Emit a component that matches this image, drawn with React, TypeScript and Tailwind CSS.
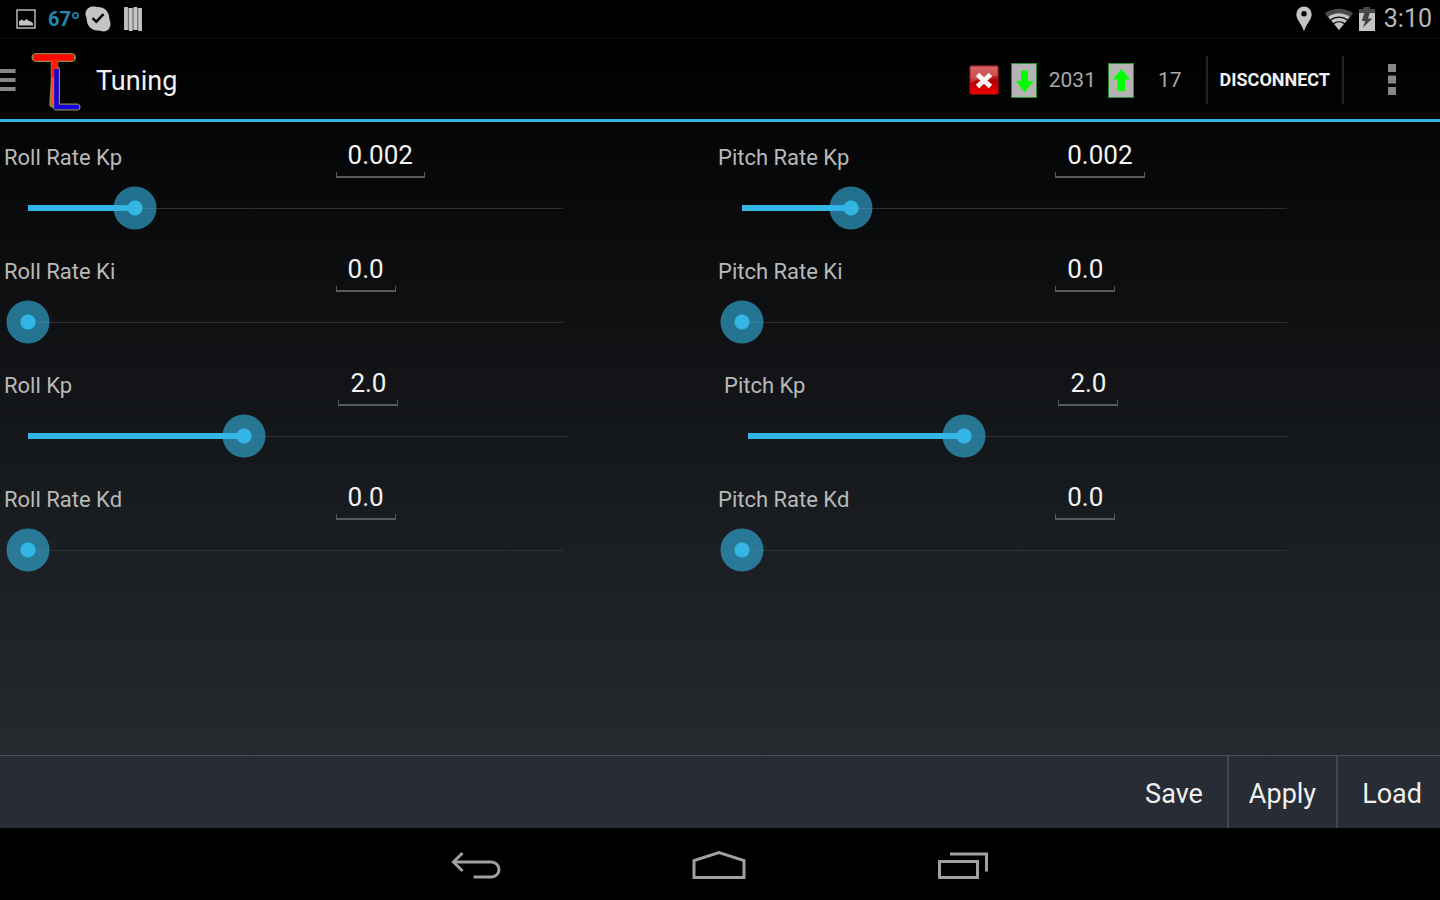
import { useState } from 'react';
import { clsx } from 'clsx';

type Gain = {
  id: string;
  label: string;
  text: string;
  /** Slider position, 0 - 1000 */
  position: number;
};

type GainRow = {
  id: string;
  /** Rows with short labels split the width evenly */
  even: boolean;
  gains: Gain[];
};

const ROWS: GainRow[] = [
  {
    id: 'rate-kp',
    even: false,
    gains: [
      { id: 'roll-rate-kp', label: 'Roll Rate Kp', text: '0.002', position: 200 },
      { id: 'pitch-rate-kp', label: 'Pitch Rate Kp', text: '0.002', position: 200 },
    ],
  },
  {
    id: 'rate-ki',
    even: false,
    gains: [
      { id: 'roll-rate-ki', label: 'Roll Rate Ki', text: '0.0', position: 0 },
      { id: 'pitch-rate-ki', label: 'Pitch Rate Ki', text: '0.0', position: 0 },
    ],
  },
  {
    id: 'kp',
    even: true,
    gains: [
      { id: 'roll-kp', label: 'Roll Kp', text: '2.0', position: 400 },
      { id: 'pitch-kp', label: 'Pitch Kp', text: '2.0', position: 400 },
    ],
  },
  {
    id: 'rate-kd',
    even: false,
    gains: [
      { id: 'roll-rate-kd', label: 'Roll Rate Kd', text: '0.0', position: 0 },
      { id: 'pitch-rate-kd', label: 'Pitch Rate Kd', text: '0.0', position: 0 },
    ],
  },
];

function StatusBar() {
  return (
    <div className="flex h-[38px] items-center justify-between pl-4 pr-2">
      <div className="flex items-center">
        <svg width="20" height="20" viewBox="0 0 20 20" className="mr-3">
          <rect x="1" y="1" width="18" height="18" fill="none" stroke="#c4c4c4" strokeWidth="1.4" />
          <path d="M3 16.500v-4L5.500 10.500l2.500 1.500L10.500 10l2.500 2 2 .5L17 14.500v2z" fill="#c4c4c4" />
        </svg>
        <span className="mr-1 text-xl font-bold leading-6 text-[#2288b2]">67º</span>
        <svg width="28" height="28" viewBox="0 0 28 28" className="mr-3">
          <path
            d="M8.500 1.500C11 1.200 12 2 14 2c6.500 0 11 4.500 11.300 11 0 2 1.200 3.500 1.200 6 0 4.500-3 7.500-7 7.500-2.200 0-3-.9-5-.9C7.500 25.600 2.800 21 2.800 14.500c0-2-1.300-3-1.300-5.500 0-4 3-7.300 7-7.500z"
            fill="#c4c4c4"
          />
          <path d="M8.500 13.200l3.800 3.500 7.200-7.500" fill="none" stroke="#000" strokeWidth="2.400" />
        </svg>
        <svg width="18" height="24" viewBox="0 0 18 24">
          <rect y="1" width="18" height="22" fill="#666" />
          <path d="M2 0v23M6.700 1v23M11.400 0v23M16.100 1v23" stroke="#c4c4c4" strokeWidth="3.600" />
        </svg>
      </div>
      <div className="flex items-center">
        <svg width="16" height="26" viewBox="0 0 16 26" className="mr-3">
          <path
            fillRule="evenodd"
            d="M8 .5a7.700 7.700 0 0 1 7.700 7.700C15.700 14 10 18 8 25.500 6 18 .3 14 .3 8.200A7.700 7.700 0 0 1 8 .5zM8 5a2.700 2.700 0 1 0 0 5.400A2.700 2.700 0 0 0 8 5z"
            fill="#c4c4c4"
          />
        </svg>
        <svg width="30" height="24" viewBox="0 0 30 24" className="mr-1">
          <path d="M15 23L.8 6.500C9 .3 21 .3 29.200 6.500z" fill="#4a4a4a" />
          <path d="M15 23L4.300 9.800c6.500-4.700 14.900-4.700 21.400 0z" fill="#c4c4c4" />
          <path d="M6.200 13.200c5.200-4 12.400-4 17.600 0M9 17c3.600-2.800 8.400-2.800 12 0" fill="none" stroke="#000" strokeWidth="1.300" />
        </svg>
        <svg width="18" height="26" viewBox="0 0 18 26" className="mr-2">
          <path d="M5.500 1h6.500v2H17v5H1V3h4.500z" fill="#4a4a4a" />
          <path d="M1 7h16v18H1z" fill="#c4c4c4" />
          <path d="M6.500 6.500h5.500l-2 6h4.500L5 21.500l2.200-6.500H3.800z" fill="#444" />
        </svg>
        <span className="text-[25px] leading-8 text-[#b8b8b8]">3:10</span>
      </div>
    </div>
  );
}

function Logo() {
  return (
    <svg width="52" height="62" viewBox="0 0 52 62" fill="none" className="ml-3.5 shrink-0" aria-hidden="true">
      <g stroke="#8d8a4a" strokeLinejoin="round" strokeLinecap="round">
        <path d="M6 8.500h35.500" strokeWidth="9" />
        <path d="M24.500 12v20L23 55" strokeWidth="7.500" />
        <path d="M26.500 21v37H47" strokeWidth="7" />
      </g>
      <path d="M3.500 8.500h40.500" stroke="#ff0600" strokeWidth="6.500" />
      <path d="M24.500 10v20" stroke="#ff1a00" strokeWidth="6" />
      <path d="M23 28l-.5 28" stroke="#ff4a30" strokeWidth="3.500" />
      <path d="M26.500 20v38H49" stroke="#1400e0" strokeWidth="4.500" />
    </svg>
  );
}

function ArrowBox({ up = false }: { up?: boolean }) {
  return (
    <svg width="26" height="35" viewBox="0 0 26 35" className={clsx('shrink-0', up ? 'mr-6' : 'mr-3')}>
      <rect x=".5" y=".5" width="25" height="34" fill="#b4b4b4" stroke="#2f8f2f" strokeWidth="1" />
      <path
        d={up ? 'M13.500 6l8.500 10.500h-5V28H9.500V16.500h-5z' : 'M10 7.500h7V18h5.500L13.500 29.500 5 18h5z'}
        fill="#00ff00"
      />
    </svg>
  );
}

function ActionBar() {
  return (
    <header className="flex h-[84px] items-center border-b-3 border-[#33b5e5] border-t border-t-[#0c0c0c] pt-0.5">
      <button type="button" aria-label="Open drawer" className="flex h-full items-center">
        <svg width="16" height="22" viewBox="0 0 16 22">
          <path d="M0 2h15.500M0 11h15.500M0 20h15.500" stroke="#85878a" strokeWidth="4" />
        </svg>
        <Logo />
      </button>
      <h1 className="ml-3.5 flex-1 pt-0.5 text-[27px] leading-8 text-[#f0f0f0]">Tuning</h1>

      <svg width="30" height="30" viewBox="0 0 30 30" className="mr-3 shrink-0">
        <defs>
          <linearGradient id="alert" x1="0" y1="0" x2="0" y2="1">
            <stop offset="0" stopColor="#c63a3a" />
            <stop offset=".45" stopColor="#bb1c1c" />
            <stop offset=".5" stopColor="#b00000" />
            <stop offset="1" stopColor="#f40000" />
          </linearGradient>
        </defs>
        <rect x=".8" y=".8" width="28.400" height="28.400" rx="1.500" fill="url(#alert)" stroke="#8c1010" strokeWidth="1" />
        <path d="M1.500 1.500h27V11C20 11 12 13 1.500 18z" fill="#fff" opacity=".22" />
        <path d="M8.500 9.500l13 12M21.500 9.500l-13 12" stroke="#f4f4f4" strokeWidth="5" />
      </svg>
      <ArrowBox />
      <span className="mr-3 text-[21px] leading-7 text-[#a8a8a8]">2031</span>
      <ArrowBox up />
      <span className="mr-6 text-[21px] leading-7 text-[#a8a8a8]">17</span>
      <button
        type="button"
        className="h-12 border-x-2 border-[#222] px-3 text-lg font-bold text-[#f0f0f0]"
      >
        DISCONNECT
      </button>
      <button type="button" aria-label="More options" className="flex h-full w-24 items-center justify-center">
        <svg width="8" height="32" viewBox="0 0 8 32">
          <path d="M0 0h8v8H0zM0 11.500h8v8H0zM0 23h8v8H0z" fill="#888" />
        </svg>
      </button>
    </header>
  );
}

function GainControl({ gain }: { gain: Gain }) {
  const [text, setText] = useState(gain.text);
  const [position, setPosition] = useState(gain.position);

  return (
    <div className="flex h-[114px] flex-col">
      <div className="flex pt-3">
        <label htmlFor={gain.id} className="w-[47%] pl-1 pt-2.5 text-[22px] leading-7 text-[#b9b9b9]">
          {gain.label}
        </label>
        <div className="inline-grid">
          <input
            id={gain.id}
            type="text"
            value={text}
            onChange={(e) => setText(e.target.value)}
            className="col-start-1 row-start-1 h-11 field-sizing-content bg-transparent px-3 pb-0.5 text-[26px] leading-8 text-[#f3f3f3] outline-none"
          />
          <span className="pointer-events-none col-start-1 row-start-1 h-1.5 self-end border-x border-b-2 border-[#57595b]" />
        </div>
      </div>
      <div className="grid w-[82%] items-center pl-1.5 pt-2">
        <span className="col-start-1 row-start-1 mx-[22px] h-px bg-[#2e3033]" />
        <div className="col-start-1 row-start-1 mx-[22px]">
          <div className="h-1.5 bg-[#33b5e5]" style={{ width: `${position / 10}%` }} />
        </div>
        <input
          type="range"
          min={0}
          max={1000}
          value={position}
          aria-label={gain.label}
          onChange={(e) => setPosition(Number(e.target.value))}
          className="col-start-1 row-start-1 h-11 w-full appearance-none bg-transparent outline-none [&::-webkit-slider-thumb]:size-11 [&::-webkit-slider-thumb]:appearance-none [&::-webkit-slider-thumb]:rounded-full [&::-webkit-slider-thumb]:bg-[radial-gradient(circle,#33b5e5_7px,rgba(51,181,229,0.6)_8px,rgba(51,181,229,0.6)_21px,transparent_22px)]"
        />
      </div>
    </div>
  );
}

function NavBar() {
  return (
    <nav className="flex h-[72px] items-center justify-center gap-[191px] bg-black pt-0.5 text-[#a0a0a0]">
      <button type="button" aria-label="Back">
        <svg width="50" height="30" viewBox="0 0 50 30" fill="none" stroke="currentColor" strokeWidth="3">
          <path d="M2 12h38.500a7.500 7.500 0 0 1 0 15H22.500" />
          <path d="M11.500 3L2.500 12l9 9" />
        </svg>
      </button>
      <button type="button" aria-label="Home">
        <svg width="54" height="30" viewBox="0 0 54 30" fill="none" stroke="currentColor" strokeWidth="3">
          <path d="M2 27.500V10.500L27 2.500l25 8v17z" />
        </svg>
      </button>
      <button type="button" aria-label="Recent apps">
        <svg width="52" height="30" viewBox="0 0 52 30" fill="none" stroke="currentColor" strokeWidth="3">
          <path d="M2.500 11.500h38v16h-38z" />
          <path d="M13 4h36.500v17.500" />
        </svg>
      </button>
    </nav>
  );
}

export default function App() {
  return (
    <div className="flex min-h-screen flex-col bg-black font-[Roboto,sans-serif]">
      <StatusBar />
      <div className="flex flex-1 flex-col bg-linear-to-b/srgb from-black to-[#292e34]">
        <ActionBar />
        <main className="flex-1">
          {ROWS.map((row) => (
            <div key={row.id} className={clsx('grid', row.even ? 'grid-cols-2' : 'grid-cols-[714fr_726fr]')}>
              {row.gains.map((gain) => (
                <GainControl key={gain.id} gain={gain} />
              ))}
            </div>
          ))}
        </main>
        <footer className="flex h-[73px] justify-end border-t border-[#4a4e52] bg-[#282c34] text-[27px] text-[#f0f0f0]">
          <button type="button" className="px-6 pt-1">Save</button>
          <button type="button" className="border-x-2 border-[#43474c] px-5 pt-1">Apply</button>
          <button type="button" className="pl-6 pr-[18px] pt-1">Load</button>
        </footer>
      </div>
      <NavBar />
    </div>
  );
}
